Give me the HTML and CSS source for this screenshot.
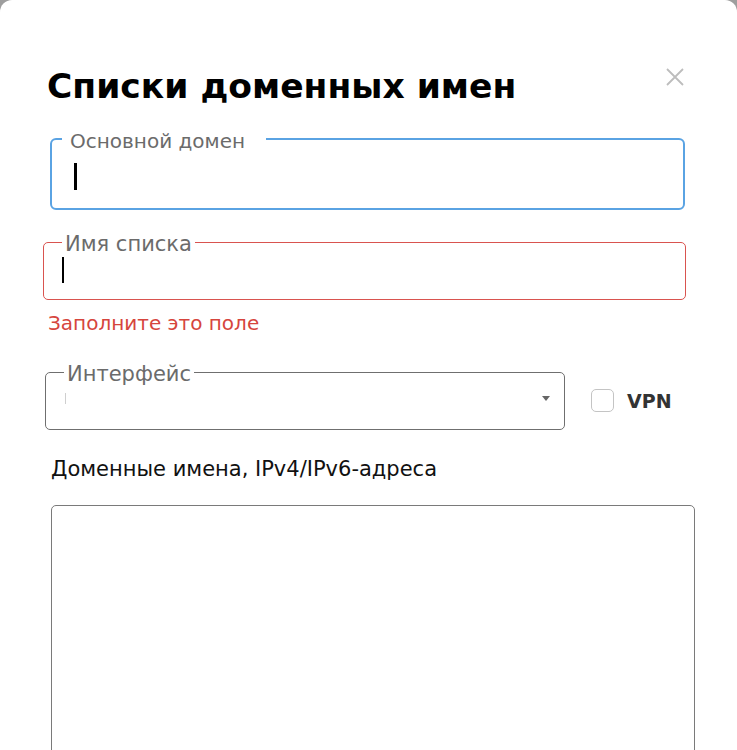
FILE: index.html
```html
<!DOCTYPE html>
<html lang="ru">
<head>
<meta charset="utf-8">
<title>Списки доменных имен</title>
<link rel="stylesheet" href="styles.css">
</head>
<body>
<div class="modal">
  <div class="header">
    <h1 class="title">Списки доменных имен</h1>
    <button class="close" aria-label="Закрыть">
      <svg width="18" height="18" viewBox="0 0 18 18"><path d="M1 1 L17 17 M17 1 L1 17" stroke="#bdbdbd" stroke-width="1.8" fill="none"/></svg>
    </button>
  </div>

  <fieldset class="field field-focus">
    <legend class="legend legend-focus">Основной домен</legend>
    <div class="field-body"><span class="caret caret-big"></span></div>
  </fieldset>

  <fieldset class="field field-error">
    <legend class="legend legend-tight">Имя списка</legend>
    <div class="field-body"><span class="caret caret-mid"></span></div>
  </fieldset>
  <div class="error-text">Заполните это поле</div>

  <div class="select-row">
    <fieldset class="field field-select">
      <legend class="legend legend-tight">Интерфейс</legend>
      <div class="select-body">
        <span class="caret caret-faint"></span>
        <span class="arrow"></span>
      </div>
    </fieldset>
    <label class="check">
      <span class="checkbox"></span>
      <span class="check-label">VPN</span>
    </label>
  </div>

  <div class="area-label">Доменные имена, IPv4/IPv6-адреса</div>
  <div class="textarea"></div>
</div>
</body>
</html>
```
FILE: styles.css
```css
html, body {
  margin: 0;
  padding: 0;
}
body {
  background: #9e9e9e;
  font-family: "DejaVu Sans", "Liberation Sans", sans-serif;
}
.modal {
  background: #fff;
  border-radius: 12px 12px 0 0;
  min-height: 750px;
  overflow: hidden;
  padding-top: 68px;
}
.header {
  display: flex;
  justify-content: space-between;
  align-items: flex-start;
  margin: 0 53px 0 47px;
}
.title {
  margin: 0;
  font-family: "DejaVu Sans", "Liberation Sans", sans-serif;
  font-weight: 700;
  font-size: 34.5px;
  line-height: 37px;
  color: #000;
}
.close {
  border: 0;
  background: none;
  padding: 0;
  margin: 0;
  width: 18px;
  height: 18px;
  display: block;
}
.close svg { display: block; }

.field {
  margin: 0;
  min-inline-size: 0;
  box-sizing: border-box;
}
.legend {
  font-family: "DejaVu Sans", "Liberation Sans", sans-serif;
  font-size: 20px;
  line-height: 22px;
  color: #6b6b6b;
  padding: 4px 3px 0 3px;
}
.legend-tight {
  font-size: 21px;
}
.field-focus {
  margin: 21px 52px 0 50px;
  border: 2px solid #5aa3e3;
  border-radius: 6px;
  padding: 0 10px 18px 10px;
}
.legend-focus {
  padding: 4px 21px 0 8px;
}
.field-body {
  display: flex;
}
.caret {
  display: block;
  background: #000;
}
.caret-big {
  width: 3px;
  height: 27px;
  margin: 11px 0 0 12px;
}
.field-error {
  margin: 19px 51px 0 43px;
  border: 1px solid #d9534f;
  border-radius: 5px;
  padding: 0 18px 16px 18px;
}
.caret-mid {
  width: 2px;
  height: 26px;
  margin: 2px 0 0 0;
}
.error-text {
  margin: 12px 0 0 48px;
  font-family: "DejaVu Sans", "Liberation Sans", sans-serif;
  font-size: 20px;
  line-height: 22px;
  color: #d6453d;
}
.select-row {
  display: flex;
  align-items: flex-start;
  margin: 25px 0 0 45px;
}
.field-select {
  width: 520px;
  border: 1px solid #6f6f6f;
  border-radius: 5px;
  padding: 0 14px 18px 18px;
}
.select-body {
  display: flex;
  align-items: center;
  justify-content: space-between;
  height: 26px;
}
.caret-faint {
  width: 1px;
  height: 11px;
  margin-left: 1px;
  background: #cfcfcf;
}
.arrow {
  width: 0;
  height: 0;
  border-left: 4px solid transparent;
  border-right: 4px solid transparent;
  border-top: 5px solid #666;
}
.check {
  display: flex;
  align-items: center;
  margin: 30px 0 0 26px;
}
.checkbox {
  width: 23px;
  height: 23px;
  box-sizing: border-box;
  border: 1px solid #c4c4c4;
  border-radius: 5px;
}
.check-label {
  margin-left: 13px;
  font-family: "DejaVu Sans", "Liberation Sans", sans-serif;
  font-weight: 700;
  font-size: 19px;
  color: #333;
}
.area-label {
  margin: 27px 0 0 51px;
  font-family: "DejaVu Sans", "Liberation Sans", sans-serif;
  font-size: 21px;
  line-height: 24px;
  color: #111;
}
.textarea {
  margin: 24px 42px 0 51px;
  height: 300px;
  border: 1px solid #7a7a7a;
  border-radius: 5px;
}
```
